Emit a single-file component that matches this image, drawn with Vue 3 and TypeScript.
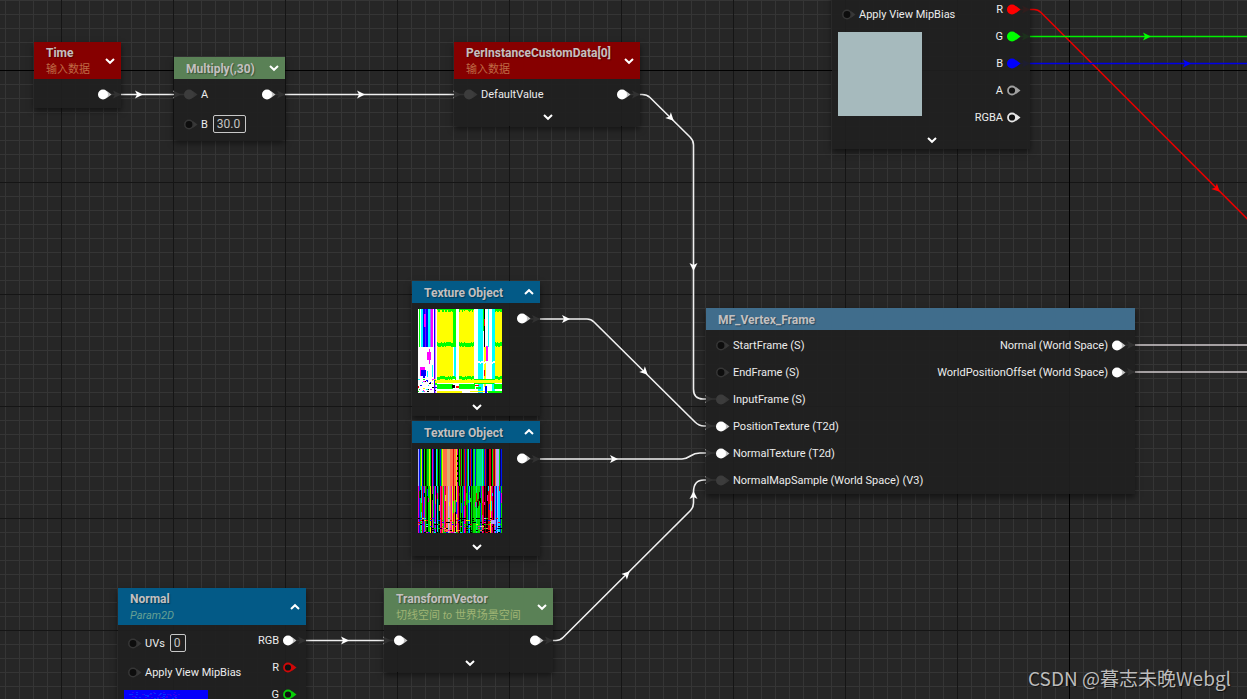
<script setup lang="ts">
type PinStyle = 'solid' | 'muted' | 'empty' | 'ring'

interface Pin {
  label?: string
  pin?: PinStyle
  color?: string
  value?: string
  wide?: boolean
  spacer?: boolean
}

interface GraphNode {
  id: string
  x: number
  y: number
  w: number
  tone?: string
  title?: string
  subtitle?: string[]
  toggle?: 'up' | 'down'
  expander?: boolean
  preview?: 'plain' | 'position' | 'normalFrames' | 'normalMap'
  inputs: Pin[]
  outputs: Pin[]
}

interface Block {
  x: number
  y: number
  w: number
  h: number
  c: string
}

const nodes: GraphNode[] = [
  {
    id: 'time', x: 34, y: 42, w: 87, tone: 'red', title: 'Time', subtitle: ['输入数据'], toggle: 'down',
    inputs: [], outputs: [{ pin: 'solid' }],
  },
  {
    id: 'multiply', x: 174, y: 57, w: 111, tone: 'green', title: 'Multiply(,30)', toggle: 'down',
    inputs: [{ label: 'A', pin: 'muted' }, { label: 'B', pin: 'empty', value: '30.0', wide: true }],
    outputs: [{ pin: 'solid' }],
  },
  {
    id: 'custom-data', x: 454, y: 42, w: 186, tone: 'red', title: 'PerInstanceCustomData[0]',
    subtitle: ['输入数据'], toggle: 'down', expander: true,
    inputs: [{ label: 'DefaultValue', pin: 'muted' }], outputs: [{ pin: 'solid' }],
  },
  {
    id: 'sample', x: 832, y: -33, w: 198, expander: true, preview: 'plain',
    inputs: [{ spacer: true, wide: true }, { label: 'Apply View MipBias', pin: 'empty' }],
    outputs: [
      { spacer: true },
      { label: 'R', pin: 'solid', color: '#ff0000' },
      { label: 'G', pin: 'solid', color: '#00ff00' },
      { label: 'B', pin: 'solid', color: '#0000ff' },
      { label: 'A', pin: 'ring', color: '#a0a0a0' },
      { label: 'RGBA', pin: 'ring', color: '#e6e6e6' },
    ],
  },
  {
    id: 'texture-a', x: 412, y: 281, w: 128, tone: 'blue', title: 'Texture Object', toggle: 'up',
    expander: true, preview: 'position', inputs: [], outputs: [{ pin: 'solid' }],
  },
  {
    id: 'texture-b', x: 412, y: 421, w: 128, tone: 'blue', title: 'Texture Object', toggle: 'up',
    expander: true, preview: 'normalFrames', inputs: [], outputs: [{ pin: 'solid' }],
  },
  {
    id: 'vertex-frame', x: 706, y: 308, w: 429, tone: 'steel', title: 'MF_Vertex_Frame',
    inputs: [
      { label: 'StartFrame (S)', pin: 'empty' },
      { label: 'EndFrame (S)', pin: 'empty' },
      { label: 'InputFrame (S)', pin: 'muted' },
      { label: 'PositionTexture (T2d)', pin: 'solid' },
      { label: 'NormalTexture (T2d)', pin: 'solid' },
      { label: 'NormalMapSample (World Space) (V3)', pin: 'muted' },
    ],
    outputs: [
      { label: 'Normal (World Space)', pin: 'solid' },
      { label: 'WorldPositionOffset (World Space)', pin: 'solid' },
    ],
  },
  {
    id: 'normal', x: 118, y: 588, w: 188, tone: 'blue', title: 'Normal', subtitle: ['', 'Param2D'],
    toggle: 'up', preview: 'normalMap',
    inputs: [{ label: 'UVs', pin: 'empty', value: '0' }, { label: 'Apply View MipBias', pin: 'empty' }],
    outputs: [
      { label: 'RGB', pin: 'solid' },
      { label: 'R', pin: 'ring', color: '#d00808' },
      { label: 'G', pin: 'ring', color: '#08d008' },
    ],
  },
  {
    id: 'transform', x: 384, y: 588, w: 169, tone: 'green', title: 'TransformVector',
    subtitle: ['切线空间', ' to ', '世界场景空间'], toggle: 'down', expander: true,
    inputs: [{ pin: 'solid' }], outputs: [{ pin: 'solid' }],
  },
]

const white = '#f0f0f0'
const wires = [
  { d: 'M110 94.5H184', c: white },
  { d: 'M274 94.5H464', c: white },
  { d: 'M629 94.5H642Q647 94.5 650 97.5L690 137Q693.5 140.5 693.5 145V389Q693.5 399 703 399H716', c: white },
  { d: 'M529 319H587Q591 319 594 322L695 422Q699 426 704 426H716', c: white },
  { d: 'M529 459H682C690 459 690 453 700 453H716', c: white },
  { d: 'M542 640.5H556Q560 640.5 563 637.5L690 511Q693.5 507.5 693.5 503V492Q693.5 480 704 480H716', c: white },
  { d: 'M297 640.5H394', c: white },
  { d: 'M1019 9.5H1034Q1038 9.5 1041 12.5L1647 619', c: '#e60000' },
  { d: 'M1019 36.5H4000', c: '#00f000' },
  { d: 'M1019 63.5H4000', c: '#0000e8' },
  { d: 'M1125 345H4000', c: '#d0cacc' },
  { d: 'M1125 372H4000', c: '#d0cacc' },
]

const arrows = [
  [120, 94.5, 0, '#ffffff'], [142, 94.5, 0, '#ffffff'], [180, 94.5, 0, '#ffffff'],
  [284, 94.5, 0, '#ffffff'], [364, 94.5, 0, '#ffffff'], [460, 94.5, 0, '#ffffff'],
  [639, 94.5, 0, '#ffffff'], [673, 120, 45, '#ffffff'], [693.5, 270, 90, '#ffffff'], [712, 399, 0, '#ffffff'],
  [539, 319, 0, '#ffffff'], [569, 319, 0, '#ffffff'], [647, 374, 45, '#ffffff'], [712, 426, 0, '#ffffff'],
  [539, 459, 0, '#ffffff'], [617, 459, 0, '#ffffff'], [712, 453, 0, '#ffffff'],
  [552, 640.5, 0, '#ffffff'], [629, 572, -45, '#ffffff'], [693.5, 492, -90, '#ffffff'], [712, 480, 0, '#ffffff'],
  [305, 640.5, 0, '#ffffff'], [348, 640.5, 0, '#ffffff'], [390, 640.5, 0, '#ffffff'],
  [1029, 9.5, 0, '#ff0000'], [1219, 191, 45, '#ff0000'],
  [1029, 36.5, 0, '#00ff00'], [1150, 36.5, 0, '#00ff00'],
  [1029, 63.5, 0, '#0000ff'], [1190, 63.5, 0, '#0000ff'],
  [1134, 345, 0, '#ffffff'], [1134, 372, 0, '#ffffff'],
] as const

function makeRandom(seed: number): () => number {
  let s = seed
  return () => {
    s = (s * 16807) % 2147483647
    return s / 2147483647
  }
}

const Y = '#ffff00'
const G = '#00ff00'
const C = '#00ffff'
const W = '#ffffff'
const B = '#0000ff'
const M = '#ff00ff'
const R = '#ff0000'
const K = '#000000'

function block(x: number, y: number, w: number, h: number, c: string): Block {
  return { x, y, w, h, c }
}

function positionTexture(): Block[] {
  const rnd = makeRandom(41)
  const out: Block[] = [
    block(0, 0, 84, 84, W),
    block(1, 0, 1, 38, G), block(3, 0, 2, 38, C), block(5, 0, 2, 38, B), block(7, 0, 1, 38, '#8000ff'),
    block(8, 0, 2, 38, B), block(10, 0, 2, 38, C), block(12, 0, 1, 38, '#8080ff'), block(13, 0, 2, 38, M),
    block(16, 0, 1, 38, B), block(17, 0, 1, 84, '#e080ff'), block(6, 5, 2, 13, M), block(16, 38, 1, 46, '#4000ff'),
    block(19, 0, 16, 71, Y), block(35, 0, 3, 38, G), block(36, 38, 2, 30, C), block(41, 0, 15, 71, Y),
    block(60, 0, 5, 84, C), block(66, 0, 1, 38, K), block(65, 0, 1, 22, G), block(66, 10, 1, 7, R),
    block(66, 38, 2, 40, Y), block(68, 37, 2, 15, M), block(70, 0, 1, 38, C),
    block(74, 0, 3, 84, C), block(77, 0, 7, 71, Y), block(66, 61, 1, 6, R),
    block(9, 43, 4, 8, M), block(11, 40, 1, 15, M), block(2, 58, 5, 9, M), block(3, 61, 5, 6, B),
    block(5, 64, 2, 5, B), block(9, 62, 1, 6, C), block(14, 56, 1, 12, C),
  ]
  for (let x = 19; x < 84; x++) {
    if ((x > 37 && x < 41) || (x > 55 && x < 77)) continue
    out.push(block(x, 0, 1, 1 + Math.floor(rnd() * 3), G))
    out.push(block(x, 33 + Math.floor(rnd() * 2), 1, 4, G))
    out.push(block(x, 67 + Math.floor(rnd() * 2), 1, 3, G))
  }
  for (let x = 58; x < 77; x++) out.push(block(x, 52 + Math.floor(rnd() * 2), 1, 2, W))
  out.push(
    block(17, 71, 67, 3, Y), block(19, 75, 16, 5, G), block(41, 75, 16, 5, G), block(76, 75, 8, 5, G),
    block(56, 70, 21, 1, G), block(56, 74, 20, 1, G), block(38, 77, 3, 2, R), block(57, 76, 4, 1, R),
    block(34, 76, 3, 3, K), block(58, 78, 5, 2, G), block(0, 77, 1, 2, R), block(19, 82, 25, 2, Y),
    block(52, 82, 18, 1, Y), block(70, 82, 14, 2, G), block(67, 77, 2, 7, B),
  )
  const speck = [M, C, Y, K, G, W, B]
  for (let i = 0; i < 40; i++) {
    out.push(block(Math.floor(rnd() * 18), 70 + Math.floor(rnd() * 13), 1 + Math.floor(rnd() * 2), 1, speck[i % 7]))
  }
  return out
}

const palette: Record<string, string> = {
  k: '#000000', r: '#e60010', g: '#00e000', b: '#0018f0', c: '#00d8ff', m: '#f000c0', y: '#e8f000',
  o: '#ff7048', t: '#00e878', w: '#b0a8ff', v: '#006000', n: '#000070', s: '#d8b070', d: '#800010',
}

function normalFramesTexture(): Block[] {
  const top = 'wbgybkgkvggygkmbkkcgkvbgyoooosssooorooymkgdgkvrbdgckrbkgtbgtttttcgbrnkkrrkgrdowwwgnbwcgk'
  const low = 'mbgcrbmgvkggykmgbmkcvkmrogmroowsomyrokymrkgkgbmrvgbckgvgggtgggbgmrkdkkrrymrkmcbwccbgykmb'
  const noise = 'kgkrmgykbgcrwkmgyokgbrk'
  const rnd = makeRandom(97)
  const out: Block[] = []
  for (let x = 0; x < 84; x++) {
    out.push(block(x, 0, 1, 37, palette[top[x]]))
    out.push(block(x, 37, 1, 47, palette[low[x]]))
    if (rnd() > 0.4) {
      out.push(block(x, 37 + Math.floor(rnd() * 20), 1, 3 + Math.floor(rnd() * 10), palette[low[(x + 7) % 84]]))
    }
  }
  for (let y = 69; y < 84; y += 2) {
    for (let x = 0; x < 84; x += 2) {
      if (rnd() > 0.6) out.push(block(x, y, 2, 1, palette[noise[Math.floor(rnd() * noise.length)]]))
    }
  }
  for (let y = 6; y < 34; y += 5) out.push(block(39, y, 2, 2, K))
  out.push(block(73, 71, 5, 4, '#b0a0ff'))
  return out
}

function normalMapTexture(): Block[] {
  const rnd = makeRandom(7)
  const out: Block[] = [block(0, 0, 84, 84, '#0400fa')]
  for (let i = 0; i < 70; i++) {
    const c = i % 2 ? '#0030ff' : '#3000f0'
    out.push(block(5 + Math.floor(rnd() * 50), 2 + Math.floor(rnd() * 10), 2, 1, c))
  }
  return out
}

const textures: Record<string, Block[]> = {
  plain: [block(0, 0, 84, 84, '#a6babd')],
  position: positionTexture(),
  normalFrames: normalFramesTexture(),
  normalMap: normalMapTexture(),
}

function dotColor(pin: Pin): string {
  if (pin.pin === 'muted') return '#3c3c3c'
  return pin.color ?? '#ffffff'
}

function tipColor(pin: Pin): string {
  if (pin.pin === 'muted' || pin.pin === 'empty') return '#383838'
  return pin.color ?? '#c4c4c4'
}
</script>

<template>
  <main class="graph">
    <svg class="wires" aria-hidden="true">
      <path v-for="(wire, i) in wires" :key="i" :d="wire.d" :stroke="wire.c" stroke-width="1.6" fill="none" />
      <path
        v-for="(a, i) in arrows"
        :key="'a' + i"
        d="M1 0L-7 -4L-5 0L-7 4Z"
        :fill="a[3]"
        :transform="`translate(${a[0]} ${a[1]}) rotate(${a[2]})`"
      />
    </svg>

    <section
      v-for="node in nodes"
      :key="node.id"
      class="node"
      :style="{ left: node.x + 'px', top: node.y + 'px', width: node.w + 'px' }"
    >
      <header v-if="node.title" class="head" :class="[node.tone, { tall: node.subtitle }]">
        <div class="titles">
          <h2>{{ node.title }}</h2>
          <p v-if="node.subtitle">{{ node.subtitle[0] }}<em v-if="node.subtitle[1]">{{ node.subtitle[1] }}</em>{{ node.subtitle[2] }}</p>
        </div>
        <button v-if="node.toggle" type="button" class="toggle" :aria-expanded="node.toggle === 'up'">
          <svg width="10" height="8" viewBox="0 0 10 8">
            <path :d="node.toggle === 'up' ? 'M1 6L5 2.2L9 6' : 'M1 2L5 5.8L9 2'" />
          </svg>
        </button>
      </header>

      <div class="body">
        <div class="columns">
          <div class="inputs">
            <div v-for="(pin, i) in node.inputs" :key="i" class="row" :class="{ high: pin.value || (pin.spacer && pin.wide) }">
              <template v-if="!pin.spacer">
                <svg class="pin" width="16" height="15" viewBox="0 0 16 15">
                  <path d="M9.5 3.7L14.5 7.5L9.5 11.3Z" :fill="tipColor(pin)" />
                  <circle v-if="pin.pin === 'empty'" cx="6" cy="7.5" r="4.2" fill="#0d0d0d" stroke="#363636" stroke-width="1.5" />
                  <circle v-else cx="6" cy="7.5" r="5" :fill="dotColor(pin)" />
                </svg>
                <label v-if="pin.value" :for="node.id + i">{{ pin.label }}</label>
                <span v-else>{{ pin.label }}</span>
                <input v-if="pin.value" :id="node.id + i" type="text" :value="pin.value" :class="{ wide: pin.wide }" />
              </template>
            </div>
            <svg v-if="node.preview" class="preview" viewBox="0 0 84 84" shape-rendering="crispEdges">
              <rect
                v-for="(b, i) in textures[node.preview]"
                :key="i"
                :x="b.x"
                :y="b.y"
                :width="b.w"
                :height="b.h"
                :fill="b.c"
              />
            </svg>
          </div>
          <div class="outputs">
            <div v-for="(pin, i) in node.outputs" :key="i" class="row">
              <template v-if="!pin.spacer">
                <span>{{ pin.label }}</span>
                <svg class="pin" width="16" height="15" viewBox="0 0 16 15">
                  <path d="M9.5 3.7L14.5 7.5L9.5 11.3Z" :fill="tipColor(pin)" />
                  <circle v-if="pin.pin === 'ring'" cx="6" cy="7.5" r="4" fill="#111111" :stroke="pin.color" stroke-width="1.8" />
                  <circle v-else cx="6" cy="7.5" r="5" :fill="dotColor(pin)" />
                </svg>
              </template>
            </div>
          </div>
        </div>
        <button v-if="node.expander" type="button" class="expander">
          <svg width="10" height="8" viewBox="0 0 10 8"><path d="M1 2L5 5.8L9 2" /></svg>
        </button>
      </div>
    </section>

    <div class="watermark">CSDN @暮志未晚Webgl</div>
  </main>
</template>

<style>
body {
  background: #262626;
}
</style>

<style scoped>
.graph {
  position: relative;
  min-height: 100vh;
  overflow: hidden;
  font-family: Roboto, "Noto Sans CJK SC", sans-serif;
  font-size: 11px;
  color: #ececec;
  background-color: #262626;
  background-image:
    linear-gradient(#000, #000),
    linear-gradient(#000, #000),
    linear-gradient(to right, #151515 1px, transparent 1px),
    linear-gradient(#151515 1px, transparent 1px),
    linear-gradient(to right, #353535 1px, transparent 1px),
    linear-gradient(#353535 1px, transparent 1px);
  background-size: 1px 100%, 100% 1px, 112px 112px, 112px 112px, 14px 14px, 14px 14px;
  background-position: 1069px 0, 0 70px, 61px 0, 0 70px, 5px 0, 0 0;
  background-repeat: no-repeat, no-repeat, repeat, repeat, repeat, repeat;
}

.wires {
  position: absolute;
  inset: 0;
  width: 100%;
  height: 100%;
}

.node {
  position: absolute;
  box-shadow: 0 3px 6px rgba(0, 0, 0, 0.5);
}

.head {
  display: flex;
  align-items: center;
  height: 22px;
  padding-left: 12px;
}

.head.tall {
  height: 37px;
}

.titles {
  flex: 1;
  min-width: 0;
  padding-top: 2px;
  white-space: nowrap;
}

h2 {
  margin: 0;
  font-size: 12px;
  line-height: 16px;
  font-weight: 700;
  color: #c4c0c0;
  text-shadow: 1px 1px 1px rgba(0, 0, 0, 0.35);
}

.head p {
  margin: 1px 0 0;
  font-size: 11px;
  line-height: 16px;
  white-space: pre;
}

.red {
  background: #860000;
}

.red p {
  color: #bf6a45;
}

.green {
  background: #5a8156;
}

.green p {
  color: #9fb474;
}

.blue {
  background: #035a87;
}

.blue p {
  color: #66a093;
}

.steel {
  background: #406d8c;
}

button {
  display: flex;
  align-items: center;
  justify-content: center;
  padding: 0;
  border: 0;
  background: none;
}

button path {
  fill: none;
  stroke: #fff;
  stroke-width: 2;
}

.toggle {
  width: 22px;
  height: 22px;
}

.expander {
  width: 100%;
  height: 18px;
  padding-left: 2px;
}

.body {
  padding-top: 2px;
  background: rgba(31, 31, 31, 0.92);
}

.columns {
  display: flex;
  justify-content: space-between;
}

.row {
  display: flex;
  align-items: center;
  height: 27px;
  white-space: nowrap;
}

.row.high {
  height: 32px;
}

.inputs .row {
  gap: 2px;
  padding-left: 9px;
}

.outputs .row {
  justify-content: flex-end;
  gap: 3px;
  padding-right: 8px;
}

.pin {
  flex: none;
}

input {
  box-sizing: border-box;
  width: 16px;
  height: 18px;
  margin-left: 3px;
  padding: 0 3px;
  border: 1px solid #c8c8c8;
  border-radius: 2px;
  background: transparent;
  color: #c4c4c4;
  font: 12px Roboto, sans-serif;
}

input.wide {
  width: 33px;
}

.preview {
  display: block;
  width: 84px;
  height: 84px;
  margin: 4px 6px 5px;
}

.watermark {
  position: absolute;
  right: 16px;
  bottom: 8px;
  font-family: "Noto Sans CJK SC", sans-serif;
  font-size: 19px;
  line-height: 26px;
  color: #bcbcbc;
  text-shadow: 1px 1px 1px rgba(0, 0, 0, 0.6);
}
</style>
